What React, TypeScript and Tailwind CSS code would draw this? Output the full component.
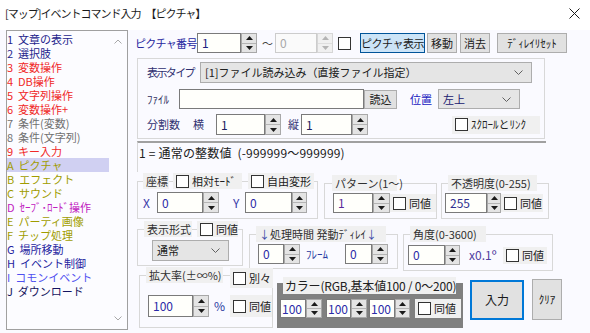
import React from 'react';

const items: [string, string][] = [
  ['1 文章の表示', 'text-[#24248c]'],
  ['2 選択肢', 'text-[#24248c]'],
  ['3 変数操作', 'text-[#f02828]'],
  ['4 DB操作', 'text-[#f02828]'],
  ['5 文字列操作', 'text-[#f02828]'],
  ['6 変数操作+', 'text-[#f02828]'],
  ['7 条件(変数)', 'text-[#707070]'],
  ['8 条件(文字列)', 'text-[#707070]'],
  ['9 キー入力', 'text-[#f02828]'],
  ['A ピクチャ', 'text-[#a09c00]'],
  ['B エフェクト', 'text-[#a09c00]'],
  ['C サウンド', 'text-[#a09c00]'],
  ['D ｾｰﾌﾞ･ﾛｰﾄﾞ操作', 'text-[#c020c0]'],
  ['E パーティ画像', 'text-[#a09c00]'],
  ['F チップ処理', 'text-[#a09c00]'],
  ['G 場所移動', 'text-[#2424a0]'],
  ['H イベント制御', 'text-[#2424a0]'],
  ['I コモンイベント', 'text-[#5050f0]'],
  ['J ダウンロード', 'text-[#141460]'],
];

function Tri({ up, dim }: { up?: boolean; dim?: boolean }) {
  return (
    <svg width="7" height="4" viewBox="0 0 7 4" className="block">
      <polygon points={up ? '0,4 3.5,0 7,4' : '0,0 7,0 3.5,4'} fill={dim ? '#b4b4b4' : '#1a1a1a'} />
    </svg>
  );
}

type NumProps = {
  value: string;
  iw: string;
  sw?: string;
  h?: string;
  color?: string;
  disabled?: boolean;
  cls?: string;
};

function NumInput({ value, iw, sw = 'w-[16px]', h = 'h-[20px]', color = 'text-[#2a2aa8]', disabled, cls = '' }: NumProps) {
  return (
    <div className={`flex shrink-0 ${h} ${cls}`}>
      <div
        className={`${iw} h-full border flex items-center pl-[4px] text-[12px] ${
          disabled ? 'border-[#cccccc] bg-[#fafafa] text-[#a8a8a8]' : `border-[#7a7a7a] bg-[#fffffb] ${color}`
        }`}
      >
        {value}
      </div>
      <div className={`${sw} h-full flex flex-col border ${disabled ? 'border-[#d6d6d6]' : 'border-[#a8a8a8]'}`}>
        <div className={`flex-1 flex items-center justify-center border-b ${disabled ? 'border-[#dedede] bg-[#f0f0f0]' : 'border-[#b4b4b4] bg-[#e4e4e4]'}`}>
          <Tri up dim={disabled} />
        </div>
        <div className={`flex-1 flex items-center justify-center ${disabled ? 'bg-[#f0f0f0]' : 'bg-[#e4e4e4]'}`}>
          <Tri dim={disabled} />
        </div>
      </div>
    </div>
  );
}

function Box() {
  return <span className="block w-[13px] h-[13px] border border-[#333333] bg-white shrink-0" />;
}

function CheckL({ label, cls = '' }: { label: string; cls?: string }) {
  return (
    <div className={`flex items-center bg-[#f0f0f0] pl-[3px] gap-[3px] whitespace-nowrap shrink-0 text-[#202020] ${cls}`}>
      <Box />
      <span>{label}</span>
    </div>
  );
}

function Btn({ children, cls }: { children: React.ReactNode; cls: string }) {
  return <div className={`flex items-center justify-center border whitespace-nowrap shrink-0 text-[#1a1a1a] ${cls}`}>{children}</div>;
}

function Chevron() {
  return (
    <svg width="9" height="5" viewBox="0 0 9 5" className="block shrink-0">
      <polyline points="0.5,0.5 4.5,4.5 8.5,0.5" fill="none" stroke="#606060" strokeWidth="1" />
    </svg>
  );
}

function Select({ text, cls, tcls = 'text-[#202020]' }: { text: string; cls: string; tcls?: string }) {
  return (
    <div className={`flex items-center justify-between border border-[#adadad] bg-[#e5e5e5] pl-[4px] pr-[8px] shrink-0 ${cls}`}>
      <span className={`whitespace-nowrap ${tcls}`}>{text}</span>
      <Chevron />
    </div>
  );
}

function Legend({ children, cls = '' }: { children: React.ReactNode; cls?: string }) {
  return <div className={`h-[16px] flex items-center bg-[#f0f0f0] px-[3px] whitespace-nowrap shrink-0 text-[#303030] ${cls}`}>{children}</div>;
}

function Group({ cls, lcls, legend, children }: { cls: string; lcls: string; legend: React.ReactNode; children: React.ReactNode }) {
  return (
    <div className={`border border-[#d8d8d8] shrink-0 ${cls}`}>
      <div className={`flex items-start -mt-[9px] ${lcls}`}>{legend}</div>
      {children}
    </div>
  );
}

export default function App() {
  return (
    <div className="w-[590px] h-[333px] bg-[#fafaff] overflow-hidden flex flex-col text-[11px] leading-none text-[#202020] font-['Noto_Sans_CJK_JP','Noto_Sans',sans-serif]">
      {/* title bar */}
      <div className="h-[30px] shrink-0 flex items-center pl-[5px] pb-[3px] bg-white text-[#1a1a1a]">
        <span className="whitespace-nowrap tracking-[-1px]">[マップ]イベントコマンド入力</span>
        <span className="ml-[5px] whitespace-nowrap tracking-[-1px]">【ピクチャ】</span>
        <svg width="11" height="11" viewBox="0 0 11 11" className="ml-auto mr-[10px]">
          <path d="M0.5 0.5 L10.5 10.5 M10.5 0.5 L0.5 10.5" stroke="#1a1a1a" strokeWidth="1" />
        </svg>
      </div>

      <div className="flex flex-1">
        {/* command list */}
        <div className="ml-[6px] w-[122px] h-[300px] border border-[#a0a0a0] bg-[#fcfcff] flex shrink-0">
          <div className="w-[102px] pt-[1px] flex flex-col">
            {items.map(([t, c]) => (
              <div key={t} className={`h-[14px] flex items-center whitespace-pre ${c} ${t === 'A ピクチャ' ? 'bg-[#d0d0f2]' : ''}`}>
                {t.replace(' ', '  ')}
              </div>
            ))}
          </div>
          <div className="flex-1 flex flex-col justify-between items-center pt-[8px] pb-[8px]">
            <svg width="8" height="5" viewBox="0 0 8 5"><polyline points="0.5,4.5 4,1 7.5,4.5" fill="none" stroke="#a8a8a8" /></svg>
            <svg width="8" height="5" viewBox="0 0 8 5"><polyline points="0.5,0.5 4,4 7.5,0.5" fill="none" stroke="#a8a8a8" /></svg>
          </div>
        </div>

        {/* right side */}
        <div className="ml-[7px] w-[455px] flex flex-col">
          <div className="mt-[3px] h-[20px] flex items-center">
            <span className="w-[62px] whitespace-nowrap text-[#2828a0] tracking-[-0.7px]">ピクチャ番号</span>
            <NumInput value="1" iw="w-[44px]" color="text-[#202080]" />
            <span className="ml-[5px] w-[13px] text-[#404040]">～</span>
            <NumInput value="0" iw="w-[42px]" disabled />
            <span className="ml-[5px]"><Box /></span>
            <Btn cls="ml-[9px] w-[65px] h-[20px] border-[#005499] bg-[#cce4f7] tracking-[-0.5px]">ピクチャ表示</Btn>
            <Btn cls="ml-[2px] w-[30px] h-[20px] border-[#adadad] bg-[#e1e1e1]">移動</Btn>
            <Btn cls="ml-[3px] w-[30px] h-[20px] border-[#adadad] bg-[#e1e1e1]">消去</Btn>
            <Btn cls="ml-[7px] w-[70px] h-[20px] border-[#adadad] bg-[#e1e1e1]">ﾃﾞｨﾚｲﾘｾｯﾄ</Btn>
          </div>

          {/* display type group */}
          <div className="mt-[5px] ml-[2px] w-[408px] h-[81px] border border-[#d8d8d8] pl-[9px] flex flex-col">
            <div className="mt-[3px] h-[21px] flex items-center">
              <span className="w-[53px] whitespace-nowrap text-[#303070] tracking-[-1.6px]">表示タイプ</span>
              <Select text="[1]ファイル読み込み（直接ファイル指定）" cls="w-[332px] h-[21px]" />
            </div>
            <div className="mt-[6px] h-[20px] flex items-center">
              <span className="w-[32px] whitespace-nowrap text-[#303060]">ﾌｧｲﾙ</span>
              <div className="w-[185px] h-[20px] border border-[#7a7a7a] bg-[#fffffb]" />
              <Btn cls="w-[33px] h-[19px] border-[#adadad] bg-[#e1e1e1]">読込</Btn>
              <span className="ml-[13px] w-[28px] whitespace-nowrap text-[#2020c0]">位置</span>
              <Select text="左上" cls="w-[82px] h-[20px]" tcls="text-[#202070]" />
            </div>
            <div className="mt-[5px] h-[21px] flex items-center">
              <span className="w-[46px] whitespace-nowrap text-[#303070]">分割数</span>
              <span className="w-[23px] text-[#303070]">横</span>
              <NumInput value="1" iw="w-[49px]" h="h-[21px]" color="text-[#202060]" />
              <span className="ml-[7px] w-[13px] text-[#303070]">縦</span>
              <NumInput value="1" iw="w-[51px]" h="h-[21px]" color="text-[#202060]" />
              <CheckL label="ｽｸﾛｰﾙとﾘﾝｸ" cls="ml-[84px] w-[88px] h-[18px]" />
            </div>
          </div>

          {/* description */}
          <div className="mt-[2px] ml-[2px] w-[409px] h-[31px] border-t-2 border-l border-t-[#a0a0a0] border-l-[#d8d8d8] pl-[1px] pt-[4px] whitespace-pre text-[12px] text-[#202020] tracking-[0.2px]">
            1 = 通常の整数値  (-999999～999999)
          </div>

          {/* row 1 of groups */}
          <div className="flex items-start">
            <Group
              cls="ml-[2px] mt-[9px] w-[181px] h-[38px]"
              lcls="ml-[5px]"
              legend={
                <>
                  <Legend cls="w-[26px]">座標</Legend>
                  <CheckL label="相対ﾓｰﾄﾞ" cls="ml-[4px] w-[69px] h-[16px] pl-0" />
                  <CheckL label="自由変形" cls="ml-[6px] w-[66px] h-[16px] pl-0" />
                </>
              }
            >
              <div className="mt-[3px] h-[21px] flex items-center pl-[5px]">
                <span className="w-[14px] text-[#3838a8] text-[12px]">X</span>
                <NumInput value="0" iw="w-[46px]" h="h-[21px]" />
                <span className="ml-[14px] w-[12px] text-[#3838a8] text-[12px]">Y</span>
                <NumInput value="0" iw="w-[47px]" sw="w-[15px]" h="h-[21px]" />
              </div>
            </Group>

            <Group
              cls="ml-[6px] mt-[11px] w-[113px] h-[36px]"
              lcls="ml-[7px]"
              legend={<Legend cls="w-[65px]">パターン(1～)</Legend>}
            >
              <div className="mt-[2px] h-[20px] flex items-center pl-[8px]">
                <NumInput value="1" iw="w-[40px]" sw="w-[17px]" color="text-[#5a2a9a]" />
                <CheckL label="同値" cls="w-[46px] h-[18px]" />
              </div>
            </Group>

            <Group
              cls="ml-[4px] mt-[11px] w-[108px] h-[36px]"
              lcls="ml-[6px]"
              legend={<Legend cls="w-[89px]">不透明度(0-255)</Legend>}
            >
              <div className="mt-[2px] h-[20px] flex items-center pl-[3px]">
                <NumInput value="255" iw="w-[42px]" sw="w-[14px]" color="text-[#303090]" />
                <CheckL label="同値" cls="w-[42px] h-[18px]" />
              </div>
            </Group>
          </div>

          {/* row 2 of groups */}
          <div className="flex items-start">
            <Group
              cls="ml-[2px] mt-[10px] w-[106px] h-[37px]"
              lcls="ml-[6px]"
              legend={
                <>
                  <Legend cls="w-[48px]">表示形式</Legend>
                  <CheckL label="同値" cls="ml-[5px] w-[41px] h-[16px]" />
                </>
              }
            >
              <Select text="通常" cls="mt-[3px] ml-[14px] w-[77px] h-[21px]" />
            </Group>

            <Group
              cls="ml-[6px] mt-[15px] w-[149px] h-[35px]"
              lcls="ml-[6px]"
              legend={
                <Legend cls="w-[130px]">
                  <span className="text-[#3a4aa8]">↓</span>処理時間 発動ﾃﾞｨﾚｲ<span className="text-[#3a4aa8]">↓</span>
                </Legend>
              }
            >
              <div className="mt-[2px] h-[20px] flex items-center pl-[8px]">
                <NumInput value="0" iw="w-[26px]" />
                <span className="ml-[6px] w-[39px] whitespace-nowrap text-[#2838a0]">ﾌﾚｰﾑ</span>
                <NumInput value="0" iw="w-[27px]" />
              </div>
            </Group>

            <Group
              cls="ml-[5px] mt-[15px] w-[150px] h-[37px]"
              lcls="ml-[6px]"
              legend={<Legend cls="w-[76px]">角度(0-3600)</Legend>}
            >
              <div className="mt-[3px] h-[20px] flex items-center pl-[4px]">
                <NumInput value="0" iw="w-[37px]" sw="w-[15px]" />
                <span className="ml-[9px] w-[34px] whitespace-nowrap text-[#5040a0] text-[12px]">x0.1º</span>
                <CheckL label="同値" cls="w-[44px] h-[17px]" />
              </div>
            </Group>
          </div>

          {/* row 3 */}
          <div className="flex items-start">
            <Group
              cls="ml-[4px] mt-[4px] w-[134px] h-[53px]"
              lcls="ml-[6px]"
              legend={
                <>
                  <Legend cls="w-[77px]">拡大率(±∞%)</Legend>
                  <CheckL label="別々" cls="ml-[7px] mt-[1px] w-[43px] h-[20px]" />
                </>
              }
            >
              <div className="mt-[7px] h-[22px] flex items-center pl-[8px]">
                <NumInput value="100" iw="w-[45px]" h="h-[22px]" />
                <span className="ml-[5px] w-[16px] text-[#2838a0] text-[12px]">%</span>
                <CheckL label="同値" cls="w-[42px] h-[22px]" />
              </div>
            </Group>

            <div className="ml-[4px] mt-[12px] w-[186px] h-[45px] bg-[#808080] shrink-0">
              <div className="-mt-[6px] ml-[6px] w-[173px] h-[17px] bg-[#f0f0f0] flex items-center px-[2px] whitespace-nowrap text-[#202020] text-[12px] tracking-[-0.2px]">
                カラー(RGB,基本値100 / 0～200)
              </div>
              <div className="mt-[5px] h-[19px] flex items-center pl-[3px]">
                <NumInput value="100" iw="w-[26px]" h="h-[19px]" cls="[&>div:first-child]:pl-[1px]" />
                <NumInput value="100" iw="w-[25px]" h="h-[19px]" cls="ml-[4px] [&>div:first-child]:pl-[1px]" />
                <NumInput value="100" iw="w-[26px]" sw="w-[15px]" h="h-[19px]" cls="ml-[2px] [&>div:first-child]:pl-[1px]" />
                <CheckL label="同値" cls="ml-[5px] w-[46px] h-[19px]" />
              </div>
            </div>

            <Btn cls="ml-[7px] mt-[9px] w-[54px] h-[40px] border-2 border-[#0078d7] bg-[#e1e1e1] text-[12px]">入力</Btn>
            <Btn cls="ml-[8px] mt-[8px] w-[30px] h-[41px] border-[#adadad] bg-[#e1e1e1]">ｸﾘｱ</Btn>
          </div>
        </div>
      </div>
    </div>
  );
}
